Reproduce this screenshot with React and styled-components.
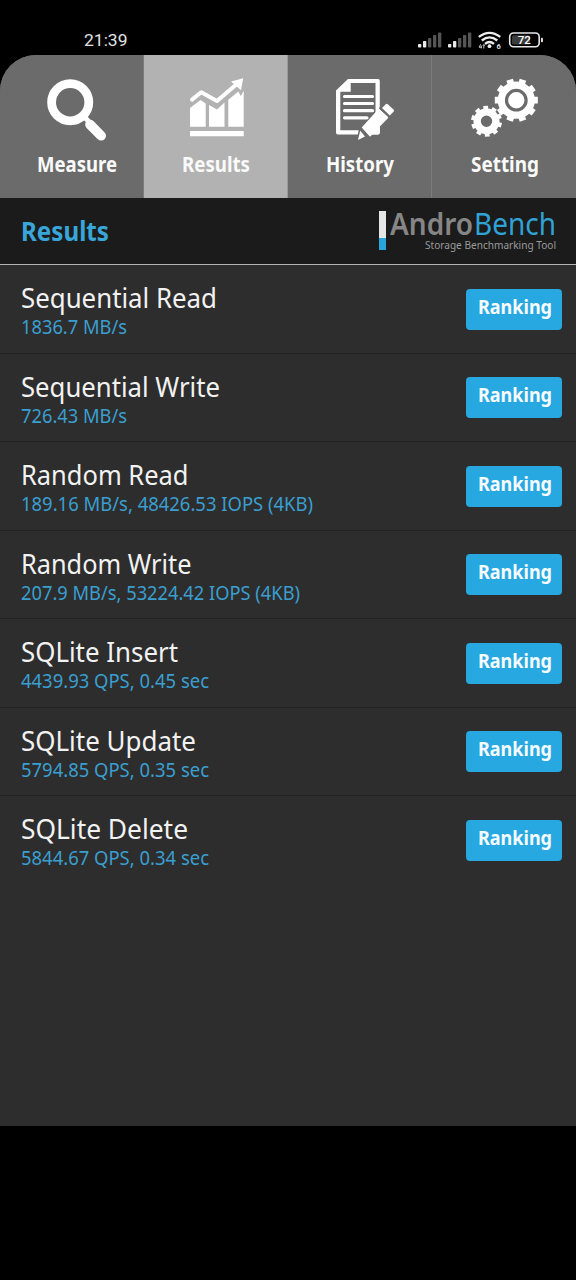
import React, { useLayoutEffect, useRef } from "react";
import styled, { createGlobalStyle } from "styled-components";

const GlobalStyle = createGlobalStyle`
  * { box-sizing: border-box; }
  html, body { margin: 0; background: #000; }
  body { font-family: "Noto Sans", "Open Sans", sans-serif; }
`;

const Screen = styled.div`
  width: 576px;
  height: 1280px;
  background: #000;
  overflow: hidden;
  display: flex;
  flex-direction: column;
`;

const FitBox = styled.span`
  display: block;
  width: ${(p) => p.$width}px;
  height: ${(p) => p.$line}px;
  white-space: nowrap;
`;

const FitInner = styled.span`
  display: block;
  width: max-content;
  transform-origin: 0 50%;
  font-family: ${(p) => p.$family || "inherit"};
  font-size: ${(p) => p.$size}px;
  line-height: ${(p) => p.$line}px;
  font-weight: ${(p) => p.$weight || 400};
  color: ${(p) => p.$color};
`;

/* Condenses or widens a label so that it fills the given width. */
function FitText({ width, size, line, weight, color, family, children }) {
  const ref = useRef(null);
  useLayoutEffect(() => {
    const fit = () => {
      const el = ref.current;
      if (el && el.offsetWidth) {
        el.style.transform = "none";
        const natural = el.getBoundingClientRect().width;
        el.style.transform = `scaleX(${width / natural})`;
      }
    };
    fit();
    if (document.fonts) document.fonts.ready.then(fit);
  }, [width, children]);
  return (
    <FitBox $width={width} $line={line}>
      <FitInner ref={ref} $size={size} $line={line} $weight={weight} $color={color} $family={family}>
        {children}
      </FitInner>
    </FitBox>
  );
}

const StatusBar = styled.div`
  height: 55px;
  padding: 30px 32px 0 84px;
  display: flex;
  justify-content: space-between;
  align-items: flex-start;
`;

const StatusIcons = styled.svg`
  display: block;
  width: 130px;
  height: 20px;
`;

const AppFrame = styled.main`
  height: 1071px;
  border-radius: 36px 36px 0 0;
  overflow: hidden;
  background: #2d2d2d;
`;

const TabBar = styled.nav`
  display: grid;
  grid-template-columns: repeat(4, 144px);
  height: 143px;
  background: #6b6b6b;
`;

const Tab = styled.div`
  display: flex;
  flex-direction: column;
  align-items: center;
  background: ${(p) => (p.$active ? "#b2b2b2" : "#6b6b6b")};
  border-right: 1px solid ${(p) => (p.$active ? "#9a9a9a" : p.$last ? "transparent" : "#7b7b7b")};
  margin-right: ${(p) => (p.$last ? "-1px" : "0")};
`;

const TabIcon = styled.svg`
  display: block;
  width: 144px;
  height: 95px;
  flex: none;
  fill: #fff;
`;

const TabLabel = styled.div`
  padding-left: ${(p) => p.$shift}px;
`;

const Header = styled.header`
  height: 67px;
  background: #1b1b1b;
  border-bottom: 1.5px solid #b4b4b4;
  padding: 13px 20px 0 20.5px;
  display: flex;
  justify-content: space-between;
`;

const Brand = styled.div`
  display: flex;
  gap: 4px;
`;

const BrandBar = styled.div`
  width: 7px;
  height: 39px;
  background: linear-gradient(#e6e6e6 0 27px, #2aa5dc 27px);
`;

const BrandText = styled.div`
  display: flex;
  flex-direction: column;
  align-items: flex-end;
`;

const BrandName = styled.div`
  display: flex;
  gap: 1px;
  margin-top: -2px;
`;

const Row = styled.section`
  height: 88.55px;
  padding: 17px 14px 0 20.5px;
  display: flex;
  justify-content: space-between;
  border-bottom: 1px solid ${(p) => (p.$last ? "transparent" : "#232323")};
`;

const RowText = styled.div`
  display: flex;
  flex-direction: column;
  gap: 1px;
`;

const RankingButton = styled.button`
  width: 96px;
  height: 41px;
  margin: 6.5px 0 0;
  padding: 0 0 0 1px;
  border: 0;
  border-radius: 4px;
  background: #27a8e1;
  display: flex;
  align-items: flex-start;
  justify-content: center;
  font-family: inherit;
`;

const gearPath = (cx, cy, outer, body, teeth, offset) => {
  const step = (Math.PI * 2) / teeth;
  const pts = [];
  for (let i = 0; i < teeth; i += 1) {
    const a = i * step + offset;
    [[-0.5, body], [-0.29, body], [-0.25, outer], [0.25, outer], [0.29, body]].forEach(([f, r]) => {
      pts.push(`${(cx + r * Math.cos(a + f * step)).toFixed(2)} ${(cy + r * Math.sin(a + f * step)).toFixed(2)}`);
    });
  }
  return `M${pts.join("L")}Z`;
};

const MeasureIcon = () => (
  <TabIcon viewBox="0 0 144 95">
    <circle cx="70.2" cy="47.2" r="18.6" fill="none" stroke="#fff" strokeWidth="8.8" />
    <path d="M84 61.5L90 68" stroke="#fff" strokeWidth="5" />
    <path d="M90 69.5L101.2 80.8" stroke="#fff" strokeWidth="9.6" strokeLinecap="round" />
  </TabIcon>
);

const ResultsIcon = () => (
  <TabIcon viewBox="0 0 144 95">
    <path d="M46 71.7V53L56.5 45L61.7 48.5V71.7Z" />
    <path d="M65 71.7V50L73 54.5L80.5 47.5V71.7Z" />
    <path d="M84.3 71.7V44.8L94.3 36.5L96.8 41L99.7 35.7V71.7Z" />
    <path d="M46 76H99.7V81.3H46Z" />
    <path d="M48 44.6L57.2 37.2L73 46L94 28" fill="none" stroke="#fff" strokeWidth="4" strokeLinecap="round" strokeLinejoin="round" />
    <path d="M99.2 23.2L87 26.5L97 35.3Z" />
  </TabIcon>
);

const HistoryIcon = () => (
  <TabIcon viewBox="0 0 144 95">
    <path fillRule="evenodd" d="M60 24H90Q91.8 24 91.8 26V77.5Q91.8 79.4 90 79.4H49.8Q48 79.4 48 77.5V35.5ZM62.7 28V36.7H52.3V75.2H87.5V28Z" />
    <path d="M56.5 41.5H84.5M56.5 48.5H84.5M56.5 55.7H84.5M56.5 62.8H79" stroke="#fff" strokeWidth="3.2" strokeLinecap="round" />
    <path d="M68 87L71.5 72L74 71L83 82.5L78 84Z" fill="#6b6b6b" />
    <path d="M73.7 72.5L90 54.5Q91 53.5 92 54.5L99.8 61.5Q100.6 62.5 99.7 63.5L91.8 71.5V77.5Q91.8 79.4 90 79.4H84.5L82 81.8Z" />
    <path d="M70 85L72.2 75.8L77 81.4Z" />
    <path d="M91.5 52.5L101.5 61.8" stroke="#6b6b6b" strokeWidth="1.8" />
    <path d="M94 53L97.7 49.3Q98.8 48.4 100 49.4L105.5 54.4Q106.5 55.6 105.5 56.8L101.8 60.4Z" />
  </TabIcon>
);

const SettingIcon = () => (
  <TabIcon viewBox="0 0 144 95">
    <path fillRule="evenodd" d={gearPath(54.5, 66.3, 15.6, 13, 10, 0.26) + "M60.2 66.3A5.7 5.7 0 1 0 48.8 66.3A5.7 5.7 0 1 0 60.2 66.3Z"} />
    <path d={gearPath(84.3, 45.2, 21.8, 18.6, 10, 0)} />
    <circle cx="84.3" cy="45.2" r="9.8" fill="none" stroke="#6b6b6b" strokeWidth="3.2" />
  </TabIcon>
);

const SignalBars = ({ x }) => (
  <g transform={`translate(${x} 0)`}>
    {[3.5, 6.5, 9.5, 12.5, 15].map((h, i) => (
      <rect key={h} x={i * 5} y={17.5 - h} width="3.3" height={h} rx="0.8" fill={i < 2 ? "#e8e8e8" : "#555"} />
    ))}
  </g>
);

const StatusGlyphs = () => (
  <StatusIcons viewBox="414 30 130 20">
    <g transform="translate(0 30)">
      <SignalBars x={418} />
      <SignalBars x={448} />
    </g>
    <g fill="none" stroke="#eee" strokeWidth="2.3">
      <path d="M478.8 36.9Q489.5 28.8 500.3 36.9" />
      <path d="M481.8 40.5Q489.5 34.3 497.3 40.5" />
      <path d="M485 43.8Q489.5 40.2 494 43.8" />
    </g>
    <circle cx="489.5" cy="46.2" r="1.9" fill="#eee" />
    <path d="M480.8 44.2L479 47.2H481.9M481.2 45.5V48.5M483.8 48.5V44.5L482.8 45.5M483.8 44.5L484.9 45.5" fill="none" stroke="#ddd" strokeWidth="0.9" />
    <text x="496.4" y="48.7" fontFamily="Roboto" fontWeight="700" fontSize="7.5" fill="#ddd">6</text>
    <rect x="509.7" y="33" width="29.5" height="13.8" rx="3.8" fill="none" stroke="#e8e8e8" strokeWidth="1.6" />
    <rect x="512" y="35.2" width="18" height="9.4" rx="1.5" fill="#3c3c3c" />
    <rect x="541" y="37.7" width="1.9" height="4.6" rx="0.8" fill="#e8e8e8" />
    <text x="524.3" y="44.1" textAnchor="middle" fontFamily="Roboto" fontWeight="500" fontSize="11.5" fill="#fff">72</text>
  </StatusIcons>
);

const tabs = [
  { label: "Measure", Icon: MeasureIcon, width: 80, shift: 10 },
  { label: "Results", Icon: ResultsIcon, width: 68, shift: 1, active: true },
  { label: "History", Icon: HistoryIcon, width: 68, shift: 1 },
  { label: "Setting", Icon: SettingIcon, width: 68, shift: 2 },
];

const results = [
  { name: "Sequential Read", width: 196, value: "1836.7 MB/s", valueWidth: 106 },
  { name: "Sequential Write", width: 199, value: "726.43 MB/s", valueWidth: 106 },
  { name: "Random Read", width: 167.5, value: "189.16 MB/s, 48426.53 IOPS (4KB)", valueWidth: 292 },
  { name: "Random Write", width: 170.5, value: "207.9 MB/s, 53224.42 IOPS (4KB)", valueWidth: 279 },
  { name: "SQLite Insert", width: 157, value: "4439.93 QPS, 0.45 sec", valueWidth: 188 },
  { name: "SQLite Update", width: 175, value: "5794.85 QPS, 0.35 sec", valueWidth: 188 },
  { name: "SQLite Delete", width: 167, value: "5844.67 QPS, 0.34 sec", valueWidth: 188 },
];

export default function App() {
  return (
    <Screen>
      <GlobalStyle />
      <StatusBar>
        <FitText width={43.5} size={16.8} line={20} color="#e2e2e2" family="Roboto, sans-serif">21:39</FitText>
        <StatusGlyphs />
      </StatusBar>
      <AppFrame>
        <TabBar>
          {tabs.map(({ label, Icon, width, shift, active }, i) => (
            <Tab key={label} $active={active} $last={i === tabs.length - 1}>
              <Icon />
              <TabLabel $shift={shift}>
                <FitText width={width} size={20.5} line={28} weight={700} color="#fafafa">{label}</FitText>
              </TabLabel>
            </Tab>
          ))}
        </TabBar>
        <Header>
          <FitText width={88} size={26.5} line={41} weight={700} color="#38a6d8">Results</FitText>
          <Brand>
            <BrandBar />
            <BrandText>
              <BrandName>
                <FitText width={83} size={30} line={30} weight={600} color="#868686">Andro</FitText>
                <FitText width={82} size={30} line={30} color="#2fa3d6">Bench</FitText>
              </BrandName>
              <FitText width={131} size={10.5} line={12} color="#9a9a9a">Storage Benchmarking Tool</FitText>
            </BrandText>
          </Brand>
        </Header>
        {results.map((r, i) => (
          <Row key={r.name} $last={i === results.length - 1}>
            <RowText>
              <FitText width={r.width} size={26.6} line={32} color="#f2f2f2">{r.name}</FitText>
              <FitText width={r.valueWidth} size={19} line={24} color="#3a9fd0">{r.value}</FitText>
            </RowText>
            <RankingButton>
              <FitText width={74} size={20} line={35} weight={700} color="#f6fcff">Ranking</FitText>
            </RankingButton>
          </Row>
        ))}
      </AppFrame>
    </Screen>
  );
}
